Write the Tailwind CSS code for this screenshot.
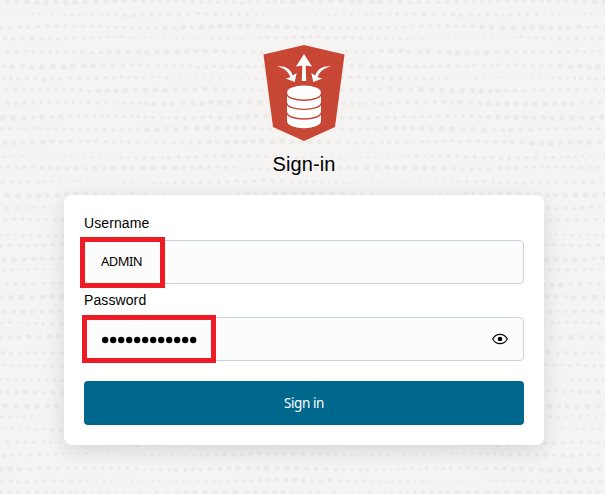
<!DOCTYPE html>
<html lang="en">
<head>
<meta charset="utf-8">
<title>Sign-in</title>
<script src="https://cdn.jsdelivr.net/npm/@tailwindcss/browser@4"></script>
</head>
<body class="relative h-[494px] w-[605px] overflow-hidden bg-[#f5f4f2] font-['Noto_Sans',sans-serif] text-black">
<svg id="texture" class="absolute inset-0" width="605" height="494" fill="#ecebe9" aria-hidden="true"></svg>
<main class="relative flex flex-col items-center pt-[45px] pl-[3px]">
  <svg width="82" height="96" viewBox="0 0 82 96">
    <path fill="#c74634" d="M41 0 81.5 9.5 72 82 41 96 10 82 .5 9.5Z"/>
    <g fill="#fff">
      <path d="M41 9 49 21.5 42.7 20.5 43.2 36H38.8L39.3 20.5 33 21.5Z"/>
      <path d="M14 21.5C21 20.5 27.5 23.5 29.8 30.5L33.7 28 31.7 37 22.7 33.6 27.4 32.2C25.5 26.5 21 22.8 14 21.5Z"/>
      <path d="M68 21.5C61 20.5 54.5 23.5 52.2 30.5L48.3 28 50.3 37 59.3 33.6 54.6 32.2C56.5 26.5 61 22.8 68 21.5Z"/>
      <path d="M24 48V76C24 85.5 58 85.5 58 76V48Z"/>
      <ellipse cx="41" cy="47.5" rx="17" ry="7"/>
    </g>
    <path fill="none" stroke="#c74634" stroke-width="1.4" d="M23.5 48C23.5 57.7 58.5 57.7 58.5 48M23.5 57.5C23.5 66.7 58.5 66.7 58.5 57.5M23.5 67C23.5 76.3 58.5 76.3 58.5 67"/>
  </svg>
  <h1 class="mt-[9px] h-[28px] font-['Liberation_Sans',sans-serif] text-[20px] leading-[28px] tracking-[0.1px]">Sign-in</h1>
  <form class="mt-[17px] flex h-[250px] w-[480px] flex-col rounded-lg bg-white px-5 pt-5 shadow-[0_6px_20px_rgba(0,0,0,0.12)]">
    <div class="h-[25px] font-['Liberation_Sans',sans-serif] text-[14px] leading-4 tracking-[0.1px]">Username</div>
    <div class="relative flex h-[44px] items-center rounded border border-[#c9d3df] bg-[#fcfcfc] px-4 text-[13px] tracking-[-0.55px]">ADMIN
      <span class="absolute top-[-4px] left-[-5px] h-[51px] w-[85px] border-[5px] border-[#ed1c24]"></span>
    </div>
    <div class="h-[33px] pt-2 font-['Liberation_Sans',sans-serif] text-[14px] leading-4 tracking-[0.1px]">Password</div>
    <div class="relative flex h-[44px] items-center justify-between rounded border border-[#c9d3df] bg-[#fcfcfc] pr-[15px] pl-4">
      <svg width="98" height="8" id="dots" class="relative top-px" fill="#000"></svg>
      <svg width="16" height="12" viewBox="0 0 16 12"><path d="M.7 6C4 -.2 12 -.2 15.3 6 12 12.2 4 12.2.7 6Z" fill="none" stroke="#000" stroke-width="1.1"/><circle cx="8" cy="6" r="2.3"/></svg>
      <span class="absolute top-[-3px] left-[-3px] h-[48px] w-[134px] border-[5px] border-[#ed1c24]"></span>
    </div>
    <button type="button" class="mt-5 h-[44px] rounded bg-[#00688c] text-[13.5px] tracking-[-0.4px] text-white">Sign in</button>
  </form>
</main>
<script>
let seed = 7;
const rnd = () => (seed = (seed * 16807) % 2147483647) / 2147483647;
const rows = [1.5,14.5,27,38,52,66,78,90,103,117,129,142,157,168,182,194.5,207.5,220,235,244.5,259,269.5,284,296.5,311,323.5,337,352.5,366,380,392,405.5,416.7,429,443,454.5,469,481,493];
const small = [14.5,38,78,157,182,207.5,235,244.5,269.5,311,352.5,380,416.7,429,454.5,481];
let out = '';
for (const y of rows) {
  const base = small.includes(y) ? 1.4 : 2.1, phase = rnd() * 6;
  for (let x = rnd() * 8; x < 608;) {
    const r = base + Math.sin(x / 45 + phase) * .6 + rnd() * .5;
    const drift = Math.sin(x / 30 + phase) * .8;
    out += `<ellipse cx="${x}" cy="${y + drift + rnd() - .5}" rx="${r}" ry="${r * .92}"/>`;
    x += 4 + r * 1.6 + rnd() * 2.4;
  }
}
document.getElementById('texture').innerHTML = out;
document.getElementById('dots').innerHTML = Array.from({length: 12}, (_, i) => `<circle cx="${4.2 + i * 8}" cy="4" r="3.2"/>`).join('');
</script>
</body>
</html>
